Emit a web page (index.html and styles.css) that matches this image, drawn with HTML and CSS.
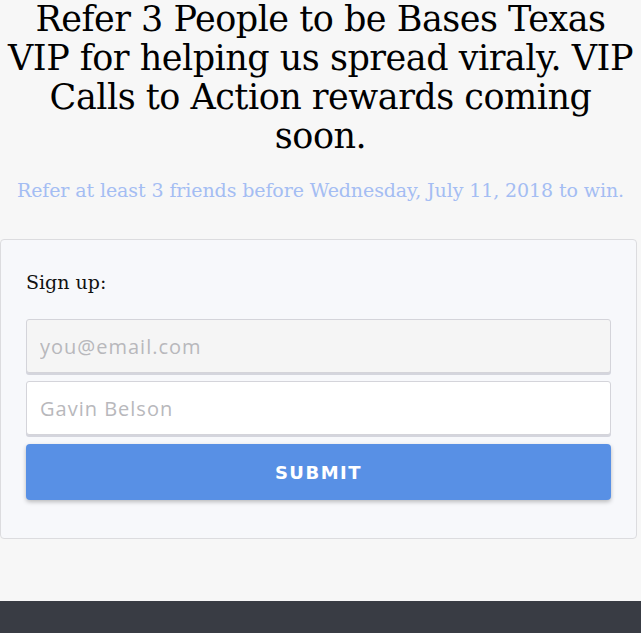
FILE: index.html
```html
<!DOCTYPE html>
<html>
<head>
<meta charset="utf-8">
<link rel="stylesheet" href="styles.css">
</head>
<body>
<main class="page">
  <h1 class="headline">Refer 3 People to be Bases Texas VIP for helping us spread viraly. VIP Calls to Action rewards coming soon.</h1>
  <p class="subtitle">Refer at least 3 friends before Wednesday, July 11, 2018 to win.</p>
  <section class="card">
    <p class="label">Sign up:</p>
    <form class="form">
      <input class="field field-email" type="email" placeholder="you@email.com">
      <input class="field" type="text" placeholder="Gavin Belson">
      <button class="submit" type="button">SUBMIT</button>
    </form>
  </section>
</main>
<footer class="footer"></footer>
</body>
</html>
```

FILE: styles.css
```css
html, body {
  margin: 0;
  padding: 0;
  background: #f7f7f7;
}
body {
  font-family: "DejaVu Serif", "Liberation Serif", serif;
  color: #111;
}
.page {
  height: 601px;
  overflow: hidden;
}
.headline {
  margin: 0;
  padding: 0;
  font-weight: normal;
  font-size: 35px;
  line-height: 39px;
  text-align: center;
  letter-spacing: -0.5px;
  color: #000;
}
.subtitle {
  margin: 22px 0 0;
  text-align: center;
  color: #a4bdf3;
  font-size: 19px;
  line-height: 24px;
  letter-spacing: -0.1px;
}
.card {
  margin: 37px 4px 0 0;
  background: #f7f8fb;
  border: 1px solid #dcdcdf;
  border-radius: 4px;
  padding: 24px 25px 38px;
}
.label {
  margin: 0;
  font-size: 19px;
  line-height: 36px;
  color: #111;
}
.form {
  margin-top: 19px;
  display: flex;
  flex-direction: column;
  gap: 8px;
}
.field {
  box-sizing: border-box;
  height: 54px;
  width: 100%;
  margin: 0;
  padding: 0 13px;
  border: 1px solid #d4d4da;
  border-radius: 3px;
  box-shadow: 0 2px 0 #d4d5dd;
  background: #fff;
  font-family: "Open Sans", sans-serif;
  font-size: 20px;
  letter-spacing: 1px;
  color: #333;
  outline: none;
}
.field-email {
  background: #f5f5f5;
}
.field::placeholder {
  color: #b8b8bc;
}
.submit {
  height: 56px;
  margin: 1px 0 0;
  border: 0;
  border-radius: 4px;
  background: #5890e5;
  color: #fff;
  font-family: "DejaVu Sans", sans-serif;
  font-weight: bold;
  font-size: 18px;
  letter-spacing: 1.5px;
  box-shadow: 0 2px 4px rgba(0,0,0,0.25);
}
.footer {
  height: 32px;
  background: #393c44;
}
```
